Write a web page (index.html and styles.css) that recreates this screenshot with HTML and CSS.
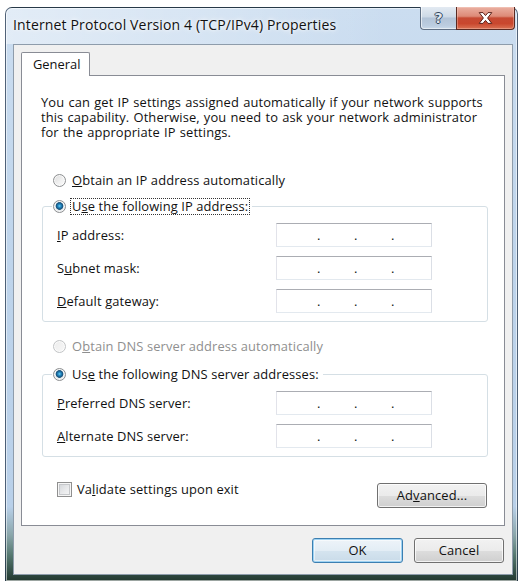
FILE: index.html
```html
<!DOCTYPE html>
<html lang="en">
<head>
<meta charset="utf-8">
<title>Internet Protocol Version 4 (TCP/IPv4) Properties</title>
<link rel="stylesheet" href="styles.css">
</head>
<body>
<div class="window">
  <div class="titlebar">
    <div class="title">Internet Protocol Version 4 (TCP/IPv4) Properties</div>
    <div class="caption">
      <div class="cap-btn help"><span class="q">?</span></div>
      <div class="cap-btn close">
        <svg class="x-icon" width="15" height="12" viewBox="0 0 15 12">
          <path d="M1.2 0.6 H5 L7.5 3.6 L10 0.6 H13.8 L9.6 6 L13.8 11.4 H10 L7.5 8.4 L5 11.4 H1.2 L5.4 6 Z" fill="#fff" stroke="#5b2118" stroke-width="1" stroke-linejoin="round"/>
        </svg>
      </div>
    </div>
  </div>
  <div class="client">
    <div class="tabs"><div class="tab">General</div></div>
    <div class="panel">
      <div class="intro">
        <div class="intro-line">You can get IP settings assigned automatically if your network supports</div>
        <div class="intro-line">this capability. Otherwise, you need to ask your network administrator</div>
        <div class="intro-line">for the appropriate IP settings.</div>
      </div>

      <div class="radio standalone first-radio"><span class="rb"></span><span><u>O</u>btain an IP address automatically</span></div>

      <fieldset class="group ip-group">
        <legend><span class="radio"><span class="rb checked"></span><span class="focus">U<u>s</u>e the following IP address:</span></span></legend>
        <div class="fields">
          <span class="lbl"><u>I</u>P address:</span>
          <span class="ipbox"><span class="oct first"></span><span class="dot">.</span><span class="oct"></span><span class="dot">.</span><span class="oct"></span><span class="dot">.</span><span class="oct"></span></span>
          <span class="lbl">S<u>u</u>bnet mask:</span>
          <span class="ipbox"><span class="oct first"></span><span class="dot">.</span><span class="oct"></span><span class="dot">.</span><span class="oct"></span><span class="dot">.</span><span class="oct"></span></span>
          <span class="lbl"><u>D</u>efault gateway:</span>
          <span class="ipbox"><span class="oct first"></span><span class="dot">.</span><span class="oct"></span><span class="dot">.</span><span class="oct"></span><span class="dot">.</span><span class="oct"></span></span>
        </div>
      </fieldset>

      <div class="radio standalone disabled dns-auto"><span class="rb"></span><span>O<u>b</u>tain DNS server address automatically</span></div>

      <fieldset class="group dns-group">
        <legend><span class="radio"><span class="rb checked"></span><span class="nofocus">Us<u>e</u> the following DNS server addresses:</span></span></legend>
        <div class="fields">
          <span class="lbl"><u>P</u>referred DNS server:</span>
          <span class="ipbox"><span class="oct first"></span><span class="dot">.</span><span class="oct"></span><span class="dot">.</span><span class="oct"></span><span class="dot">.</span><span class="oct"></span></span>
          <span class="lbl"><u>A</u>lternate DNS server:</span>
          <span class="ipbox"><span class="oct first"></span><span class="dot">.</span><span class="oct"></span><span class="dot">.</span><span class="oct"></span><span class="dot">.</span><span class="oct"></span></span>
        </div>
      </fieldset>

      <div class="bottom-row">
        <div class="check"><span class="cb"></span><span>Va<u>l</u>idate settings upon exit</span></div>
        <button class="btn advanced" type="button">Ad<u>v</u>anced...</button>
      </div>
    </div>
    <div class="dialog-buttons">
      <button class="btn default" type="button">OK</button>
      <button class="btn" type="button">Cancel</button>
    </div>
  </div>
</div>
</body>
</html>
```
FILE: styles.css
```css
html, body {
  margin: 0;
  padding: 0;
}
body {
  width: 523px;
  height: 581px;
  overflow: hidden;
  background: #ffffff;
  font-family: "Open Sans", "Noto Sans", "DejaVu Sans", sans-serif;
  font-size: 12.9px;
  letter-spacing: 0.12px;
  color: #111;
}
u {
  text-decoration: underline;
  text-underline-offset: 1px;
  text-decoration-thickness: 1px;
}

/* ---------- window frame ---------- */
.window {
  box-sizing: border-box;
  margin: 7px 5px 0 5px;
  height: 574px;
  border: 1px solid rgba(40, 58, 80, 0.75);
  border-bottom: none;
  border-radius: 7px 7px 0 0;
  padding: 0 4px 6px 7px;
  display: flex;
  flex-direction: column;
  background: linear-gradient(to bottom,
    #cbddf0 0%, #bed4eb 45%, #b9d0e9 87%, #8aa6aa 92%, #557870 95.5%, #2c463e 99%, #24382f 100%);
  box-shadow: inset 0 0 0 1px rgba(255, 255, 255, 0.55);
}
.titlebar {
  height: 36px;
  margin: 0 -4px 0 -7px;
  padding-left: 7px;
  display: flex;
  align-items: flex-start;
  border-radius: 6px 6px 0 0;
  background: linear-gradient(to right,
    rgba(255, 255, 255, 0.45) 0%, rgba(255, 255, 255, 0.2) 45%, rgba(255, 255, 255, 0) 75%);
}
.title {
  padding-top: 8px;
  line-height: 18px;
  font-size: 14px;
  letter-spacing: 0.15px;
  color: #111;
  white-space: nowrap;
  text-shadow: 0 0 6px rgba(255, 255, 255, 0.95), 0 0 3px rgba(255, 255, 255, 0.9);
}
.caption {
  margin-left: auto;
  margin-right: 2px;
  margin-top: -1px;
  display: flex;
  height: 23px;
}
.cap-btn {
  box-sizing: border-box;
  height: 23px;
  display: flex;
  align-items: center;
  justify-content: center;
  border: 1px solid;
  border-top: none;
}
.help {
  width: 36px;
  border-color: #5f6f84;
  border-right: none;
  border-radius: 0 0 0 4px;
  background: linear-gradient(to bottom, #e3eaf2 0%, #cdd9e6 45%, #b2c3d7 50%, #bccde0 85%, #cbdaea 100%);
  box-shadow: inset 1px 0 0 rgba(255, 255, 255, 0.6), inset 0 -1px 0 rgba(255, 255, 255, 0.5);
}
.q {
  font-family: "DejaVu Sans", sans-serif;
  font-weight: bold;
  font-size: 14px;
  line-height: 14px;
  letter-spacing: 0;
  color: #dfe6ee;
  text-shadow: 1px 0 0 #34465c, -1px 0 0 #34465c, 0 1px 0 #34465c, 0 -1px 0 #34465c;
}
.close {
  width: 59px;
  border-color: #5a2a22;
  border-radius: 0 0 4px 0;
  background: linear-gradient(to bottom, #eab0a2 0%, #dd8a77 42%, #c64a33 50%, #c9472e 75%, #da7253 100%);
  box-shadow: inset 0 0 0 1px rgba(255, 220, 210, 0.35);
}
.x-icon {
  display: block;
}

/* ---------- client area ---------- */
.client {
  flex: 1;
  display: flex;
  flex-direction: column;
  background: #f0f0f0;
  border: 1px solid #8e9cab;
  padding: 7px 7px 0 7px;
}
.tabs {
  display: flex;
}
.tab {
  position: relative;
  z-index: 1;
  box-sizing: border-box;
  width: 69px;
  height: 24px;
  margin-bottom: -1px;
  padding-left: 11px;
  line-height: 22px;
  letter-spacing: 0;
  background: #ffffff;
  border: 1px solid #898c95;
  border-bottom: none;
  border-radius: 2px 2px 0 0;
}
.panel {
  box-sizing: border-box;
  height: 451px;
  background: #ffffff;
  border: 1px solid #898c95;
  display: flex;
  flex-direction: column;
  align-items: flex-start;
}
.intro {
  margin: 19px 0 0 19px;
  display: flex;
  flex-direction: column;
  word-spacing: 0.7px;
}
.intro-line {
  height: 15px;
  line-height: 15px;
  white-space: nowrap;
}

/* radios */
.radio {
  display: flex;
  align-items: center;
  gap: 6px;
  height: 17px;
  line-height: 17px;
  white-space: nowrap;
}
.standalone {
  margin-left: 31px;
}
.first-radio {
  margin-top: 32px;
}
.rb {
  flex: none;
  box-sizing: border-box;
  width: 13px;
  height: 13px;
  border-radius: 50%;
  border: 1px solid #8d8f91;
  background: linear-gradient(135deg, #dcdcdc 0%, #f2f2f2 60%, #fbfbfb 100%);
  box-shadow: inset 0 0 0 1px rgba(255, 255, 255, 0.7);
}
.rb.checked {
  background: radial-gradient(circle at 50% 45%,
    #6fd3f7 0, #2a90c8 1.4px, #165a8a 3px, #2d5f80 3.6px, #eef1f3 4.2px, #dcdfe2 5.5px);
}
.disabled {
  color: #8f8f8f;
}
.disabled .rb {
  border-color: #c2c4c6;
  background: linear-gradient(135deg, #ececec, #f7f7f7);
}
.focus {
  outline: 1px dotted #333;
  outline-offset: 0;
  padding: 0 1px;
  margin-left: -1px;
  line-height: 15px;
}
.nofocus {
  padding: 0 1px;
  margin-left: -1px;
}

/* group boxes */
.group {
  box-sizing: border-box;
  width: 446px;
  margin: 9px 0 0 20px;
  padding: 8px 0 8px 9px;
  border: 1px solid #d5dfe5;
  border-radius: 3px;
  min-inline-size: 0;
}
.group legend {
  padding: 0 3px 0 1px;
  height: 17px;
}
.dns-auto {
  margin-top: 16px;
}
.dns-group {
  margin-top: 11px;
}
.fields {
  margin-left: 5px;
  display: grid;
  grid-template-columns: 219px 156px;
  grid-auto-rows: 24px;
  row-gap: 9px;
  align-items: center;
}
.lbl {
  white-space: nowrap;
}
.ipbox {
  box-sizing: border-box;
  display: flex;
  height: 24px;
  padding-left: 4px;
  line-height: 22px;
  letter-spacing: 0;
  background: #ffffff;
  border: 1px solid;
  border-color: #abadb3 #dbdfe6 #e3e9ef #e2e3ea;
}
.oct {
  width: 34px;
}
.oct.first {
  width: 36px;
}
.dot {
  width: 3px;
  text-align: center;
}

/* bottom row */
.bottom-row {
  align-self: stretch;
  display: flex;
  align-items: flex-start;
  margin-top: 24px;
  padding: 0 17px 0 35px;
}
.check {
  display: flex;
  align-items: center;
  gap: 5px;
  height: 17px;
  line-height: 17px;
  white-space: nowrap;
}
.cb {
  flex: none;
  box-sizing: border-box;
  width: 15px;
  height: 15px;
  border: 1px solid #8f8f8f;
  background: linear-gradient(135deg, #cfd2d6 0%, #e9eaec 55%, #f8f8f8 100%);
  box-shadow: inset 0 0 0 1px #f6f6f6, inset 0 0 0 2px #c6c8cb;
}

/* buttons */
.btn {
  box-sizing: border-box;
  height: 25px;
  padding: 0;
  font-family: inherit;
  font-size: inherit;
  letter-spacing: inherit;
  color: #111;
  border: 1px solid #707070;
  border-radius: 3px;
  background: linear-gradient(to bottom, #f2f2f2 0%, #ebebeb 50%, #dddddd 51%, #cfcfcf 100%);
  box-shadow: inset 0 0 0 1px rgba(255, 255, 255, 0.75);
  line-height: 21px;
}
.advanced {
  width: 110px;
  margin-left: auto;
  margin-top: 2px;
}
.dialog-buttons {
  display: flex;
  justify-content: flex-end;
  gap: 11px;
  margin-top: 12px;
  padding-right: 1px;
}
.dialog-buttons .btn {
  width: 90px;
}
.dialog-buttons .default {
  width: 91px;
  border-color: #3c7fb1;
  background: linear-gradient(to bottom, #eef4f9 0%, #e3edf5 50%, #d5e4ef 51%, #c9dbe9 100%);
  box-shadow: inset 0 0 0 1px #9fd3f3, inset 0 0 0 2px rgba(255, 255, 255, 0.5);
}
```
